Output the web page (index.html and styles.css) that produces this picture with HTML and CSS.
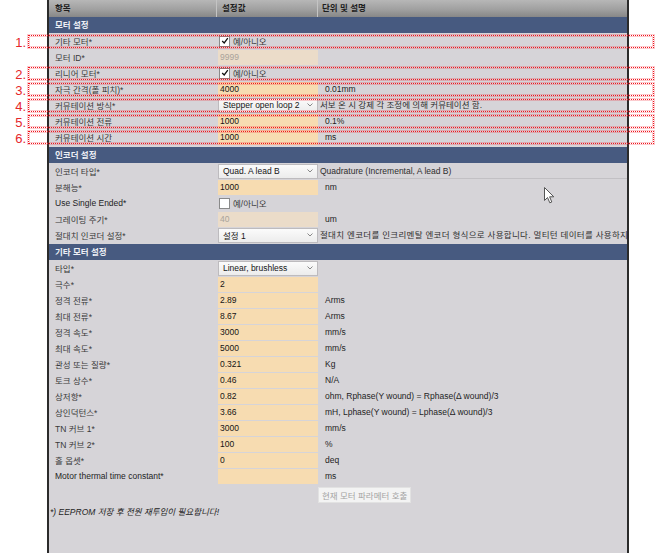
FILE: index.html
```html
<!DOCTYPE html>
<html>
<head>
    <meta charset="utf-8">
    <title>모터 설정</title>
    <link rel="stylesheet" href="styles.css">
</head>
<body>
<div class="page">
    <div class="panel">

        <div class="row head">
            <div class="label">항목</div>
            <div class="val">설정값</div>
            <div class="desc">단위 및 설명</div>
        </div>

        <!-- motor -->
        <div class="section">모터 설정</div>

        <div class="group g1">
            <div class="row">
                <div class="label">기타 모터*</div>
                <div class="val"><span class="check"><svg viewBox="0 0 10 10" width="8" height="8"><polyline points="1.5,5 4,7.5 8.5,1.5" fill="none" stroke="#111" stroke-width="1.6"/></svg></span>예/아니오</div>
                <div class="desc"></div>
                <span class="mark"><b>1.</b></span>
            </div>
            <div class="row">
                <div class="label">모터 ID*</div>
                <div class="val"><div class="input off">9999</div></div>
                <div class="desc"></div>
            </div>
            <div class="row">
                <div class="label">리니어 모터*</div>
                <div class="val"><span class="check"><svg viewBox="0 0 10 10" width="8" height="8"><polyline points="1.5,5 4,7.5 8.5,1.5" fill="none" stroke="#111" stroke-width="1.6"/></svg></span>예/아니오</div>
                <div class="desc"></div>
                <span class="mark"><b>2.</b></span>
            </div>
            <div class="row">
                <div class="label">자극 간격(폴 피치)*</div>
                <div class="val"><div class="input">4000</div></div>
                <div class="desc">0.01mm</div>
                <span class="mark"><b>3.</b></span>
            </div>
            <div class="row">
                <div class="label">커뮤테이션 방식*</div>
                <div class="val"><div class="select">Stepper open loop 2<svg viewBox="0 0 6 4" width="6" height="4"><polyline points="0.5,0.5 3,3 5.5,0.5" fill="none" stroke="#888" stroke-width="1"/></svg></div></div>
                <div class="desc wide">서보 온 시 강제 각 조정에 의해 커뮤테이션 함.</div>
                <span class="mark"><b>4.</b></span>
            </div>
            <div class="row">
                <div class="label">커뮤테이션 전류</div>
                <div class="val"><div class="input">1000</div></div>
                <div class="desc">0.1%</div>
                <span class="mark"><b>5.</b></span>
            </div>
            <div class="row">
                <div class="label">커뮤테이션 시간</div>
                <div class="val"><div class="input">1000</div></div>
                <div class="desc">ms</div>
                <span class="mark"><b>6.</b></span>
            </div>
        </div>

        <!-- encoder -->
        <div class="section">인코더 설정</div>

        <div class="group g2">
            <div class="row">
                <div class="label">인코더 타입*</div>
                <div class="val"><div class="select">Quad. A lead B<svg viewBox="0 0 6 4" width="6" height="4"><polyline points="0.5,0.5 3,3 5.5,0.5" fill="none" stroke="#888" stroke-width="1"/></svg></div></div>
                <div class="desc wide line">Quadrature (Incremental, A lead B)</div>
            </div>
            <div class="row">
                <div class="label">분해능*</div>
                <div class="val"><div class="input">1000</div></div>
                <div class="desc">nm</div>
            </div>
            <div class="row">
                <div class="label dark">Use Single Ended*</div>
                <div class="val"><span class="check"></span>예/아니오</div>
                <div class="desc"></div>
            </div>
            <div class="row">
                <div class="label">그레이팅 주기*</div>
                <div class="val"><div class="input off">40</div></div>
                <div class="desc">um</div>
            </div>
            <div class="row">
                <div class="label">절대치 인코더 설정*</div>
                <div class="val"><div class="select">설정 1<svg viewBox="0 0 6 4" width="6" height="4"><polyline points="0.5,0.5 3,3 5.5,0.5" fill="none" stroke="#888" stroke-width="1"/></svg></div></div>
                <div class="desc wide long">절대치 엔코더를 인크리멘탈 엔코더 형식으로 사용합니다. 멀티턴 데이터를 사용하지</div>
            </div>
        </div>

        <!-- other motor -->
        <div class="section">기타 모터 설정</div>

        <div class="group">
            <div class="row">
                <div class="label">타입*</div>
                <div class="val"><div class="select">Linear, brushless<svg viewBox="0 0 6 4" width="6" height="4"><polyline points="0.5,0.5 3,3 5.5,0.5" fill="none" stroke="#888" stroke-width="1"/></svg></div></div>
                <div class="desc"></div>
            </div>
            <div class="row">
                <div class="label">극수*</div>
                <div class="val"><div class="input">2</div></div>
                <div class="desc"></div>
            </div>
            <div class="row">
                <div class="label">정격 전류*</div>
                <div class="val"><div class="input">2.89</div></div>
                <div class="desc">Arms</div>
            </div>
            <div class="row">
                <div class="label">최대 전류*</div>
                <div class="val"><div class="input">8.67</div></div>
                <div class="desc">Arms</div>
            </div>
            <div class="row">
                <div class="label">정격 속도*</div>
                <div class="val"><div class="input">3000</div></div>
                <div class="desc">mm/s</div>
            </div>
            <div class="row">
                <div class="label">최대 속도*</div>
                <div class="val"><div class="input">5000</div></div>
                <div class="desc">mm/s</div>
            </div>
            <div class="row">
                <div class="label">관성 또는 질량*</div>
                <div class="val"><div class="input">0.321</div></div>
                <div class="desc">Kg</div>
            </div>
            <div class="row">
                <div class="label">토크 상수*</div>
                <div class="val"><div class="input">0.46</div></div>
                <div class="desc">N/A</div>
            </div>
            <div class="row">
                <div class="label">상저항*</div>
                <div class="val"><div class="input">0.82</div></div>
                <div class="desc">ohm, Rphase(Y wound) = Rphase(Δ wound)/3</div>
            </div>
            <div class="row">
                <div class="label">상인덕턴스*</div>
                <div class="val"><div class="input">3.66</div></div>
                <div class="desc">mH, Lphase(Y wound) = Lphase(Δ wound)/3</div>
            </div>
            <div class="row">
                <div class="label">TN 커브 1*</div>
                <div class="val"><div class="input">3000</div></div>
                <div class="desc">mm/s</div>
            </div>
            <div class="row">
                <div class="label">TN 커브 2*</div>
                <div class="val"><div class="input">100</div></div>
                <div class="desc">%</div>
            </div>
            <div class="row">
                <div class="label">홀 옵셋*</div>
                <div class="val"><div class="input">0</div></div>
                <div class="desc">deq</div>
            </div>
            <div class="row">
                <div class="label dark">Motor thermal time constant*</div>
                <div class="val"><div class="input"></div></div>
                <div class="desc">ms</div>
            </div>
        </div>

        <div class="actions">
            <button class="btn">현재 모터 파라메터 호출</button>
        </div>

        <p class="note">*) EEPROM 저장 후 전원 재투입이 필요합니다!</p>

        <!-- mouse pointer -->
        <svg class="cursor" viewBox="0 0 11 17" width="11" height="17"><path d="M0.5,0.5 L0.5,13.5 L3.5,10.5 L5.8,15.8 L7.8,15 L5.6,9.8 L9.8,9.8 Z" fill="#fff" stroke="#555" stroke-width="1"/></svg>
    </div>
</div>
</body>
</html>
```

FILE: styles.css
```css
*{
    margin: 0;
    padding: 0;
    box-sizing: border-box;
}

body, html{
    background: #fff;
    font-family: "Liberation Sans", "Noto Sans CJK KR", sans-serif;
    font-size: 8.5px;
    color: #3a3a3a;
}

.page{
    width: 655px;
    height: 553px;
    padding-left: 47px;
    overflow: hidden;
}

.panel{
    position: relative;
    width: 582px;
    height: 553px;
    background: #d6d4d8;
    border-left: 2px solid #2b2b2b;
    border-right: 2px solid #2b2b2b;
}

.group{
    padding-bottom: 1px;
}

.group.g1{
    padding-bottom: 2px;
}

.row{
    position: relative;
    display: grid;
    grid-template-columns: 168px 101px 1fr;
    height: 16px;
    align-items: center;
}

.label{
    padding-left: 6px;
    white-space: nowrap;
}

.label.dark{
    color: #1e1e1e;
}

.val{
    display: flex;
    align-items: center;
    height: 16px;
    padding-left: 1px;
    white-space: nowrap;
}

.desc{
    padding-left: 7px;
    white-space: nowrap;
    overflow: hidden;
    color: #1e1e1e;
}

.desc.wide{
    padding-left: 2px;
    color: #2e2e2e;
    height: 16px;
    line-height: 16px;
}

.desc.long{
    letter-spacing: 0.3px;
}

.desc.line{
    border-bottom: 1px solid #c2c0c4;
}

/* header */
.head{
    height: 17px;
    background: linear-gradient(#b7b7b7, #a0a0a0 55%, #878787);
    font-weight: bold;
    color: #1c1c1c;
}

.head > div{
    height: 17px;
    line-height: 17px;
    border-right: 1px solid #c4c4c4;
}

.head .val{
    padding-left: 5px;
}

.head .desc{
    padding-left: 4px;
    border-right: 0;
}

.section{
    height: 16px;
    line-height: 16px;
    padding-left: 6px;
    background: #475a80;
    color: #eef0f6;
    font-weight: bold;
}

/* fields */
.input{
    width: 100px;
    height: 15px;
    line-height: 15px;
    padding-left: 2px;
    background: #f7dcb1;
    color: #151515;
}

.input.off{
    background: #ebdcc9;
    color: #a9a39b;
}

.select{
    display: flex;
    align-items: center;
    justify-content: space-between;
    width: 100px;
    height: 15px;
    padding: 0 4px 0 4px;
    background: linear-gradient(#fbfbfb, #ececec);
    border: 1px solid #bdbbbe;
    color: #151515;
}

.check{
    display: inline-flex;
    align-items: center;
    justify-content: center;
    width: 11px;
    height: 11px;
    margin: 0 3px 0 1px;
    background: #fff;
    border: 1px solid #8a8a8a;
}

/* annotations */
.mark{
    position: absolute;
    left: -21px;
    right: -27px;
    top: 2px;
    bottom: 1px;
    border: 1px dotted #f0141e;
    box-shadow: 0 0 0 1px rgba(240, 20, 30, 0.22), inset 0 0 0 1px rgba(240, 20, 30, 0.22);
}

.mark b{
    position: absolute;
    right: 100%;
    top: 50%;
    margin-right: 3px;
    transform: translateY(-50%);
    font-weight: normal;
    font-size: 13px;
    color: #e5262b;
}

.actions{
    display: flex;
    padding: 2px 0 0 269px;
}

.btn{
    height: 16px;
    padding: 0 3px;
    background: #f3f3f3;
    border: 1px solid #e2e2e2;
    font-family: "Liberation Sans", "Noto Sans CJK KR", sans-serif;
    font-size: 8.5px;
    color: #a3a3a3;
}

.note{
    padding: 2px 0 0 1px;
    font-style: italic;
    color: #1e1e1e;
}

.cursor{
    position: absolute;
    left: 495px;
    top: 187px;
}
```
